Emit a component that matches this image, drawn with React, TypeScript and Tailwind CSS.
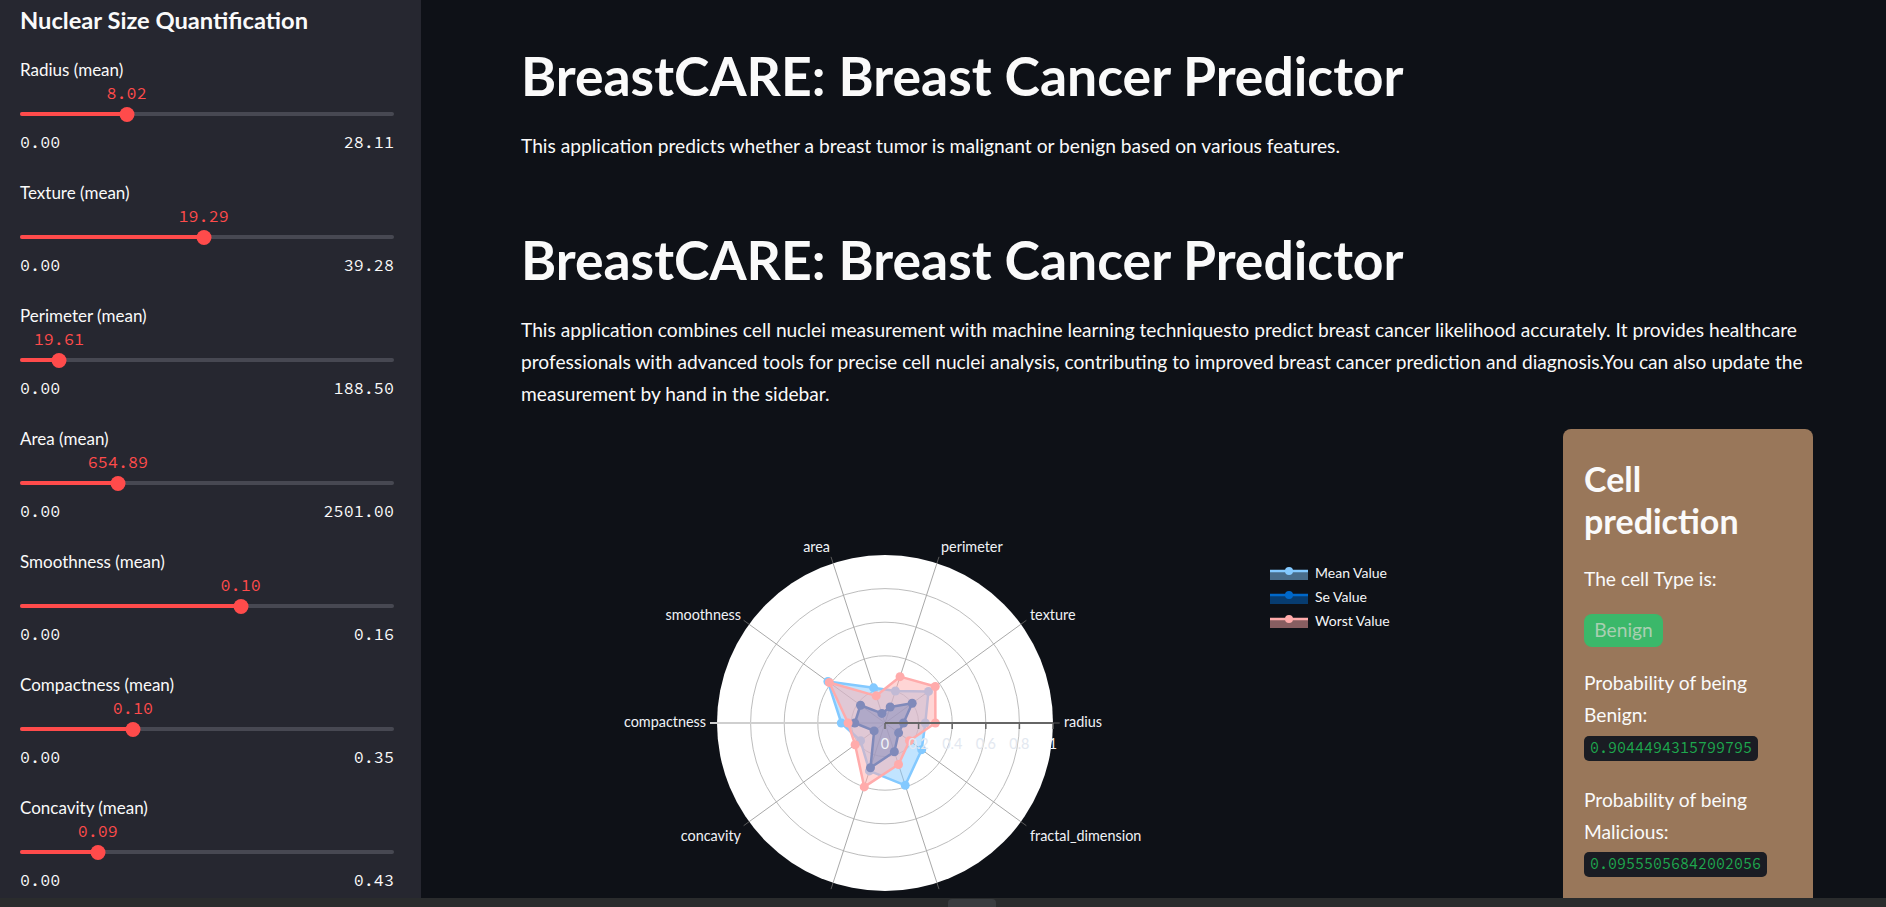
import React from "react";

type SliderSpec = { label: string; value: string; max: string; frac: number };

const sliders: SliderSpec[] = [
  { label: "Radius (mean)", value: "8.02", max: "28.11", frac: 0.285 },
  { label: "Texture (mean)", value: "19.29", max: "39.28", frac: 0.491 },
  { label: "Perimeter (mean)", value: "19.61", max: "188.50", frac: 0.104 },
  { label: "Area (mean)", value: "654.89", max: "2501.00", frac: 0.262 },
  { label: "Smoothness (mean)", value: "0.10", max: "0.16", frac: 0.59 },
  { label: "Compactness (mean)", value: "0.10", max: "0.35", frac: 0.302 },
  { label: "Concavity (mean)", value: "0.09", max: "0.43", frac: 0.208 },
];

function Slider({ s }: { s: SliderSpec }) {
  const pct = `${s.frac * 100}%`;
  return (
    <div className="mb-[19px] flex flex-col">
      <div className="h-[22px] text-[17px] leading-[22px]">{s.label}</div>
      <div className="relative h-[24px]">
        <span
          className="absolute top-0 -translate-x-1/2 text-[16.8px] leading-[24px] text-[#ff4b4b] [font-family:'Source_Code_Pro','DejaVu_Sans_Mono',monospace]"
          style={{ left: pct }}
        >
          {s.value}
        </span>
      </div>
      <div className="relative flex h-[18px] items-center">
        <div className="h-[4px] w-full rounded-full bg-[#474852]" />
        <div className="absolute left-0 h-[4px] rounded-full bg-[#ff4b4b]" style={{ width: pct }} />
        <div
          className="absolute h-[15px] w-[15px] -translate-x-1/2 rounded-full bg-[#ff4b4b]"
          style={{ left: pct }}
        />
      </div>
      <div className="flex h-[40px] items-center justify-between text-[16.8px] [font-family:'Source_Code_Pro','DejaVu_Sans_Mono',monospace]">
        <span>0.00</span>
        <span>{s.max}</span>
      </div>
    </div>
  );
}

const CX = 364;
const CY = 294;
const R = 168;

const cats = [
  "radius",
  "texture",
  "perimeter",
  "area",
  "smoothness",
  "compactness",
  "concavity",
  "concave points",
  "symmetry",
  "fractal_dimension",
];

const traces = [
  { name: "Mean Value", color: "#83c9ff", v: [0.24, 0.32, 0.2, 0.22, 0.42, 0.26, 0.18, 0.3, 0.39, 0.27] },
  { name: "Se Value", color: "#0068c9", v: [0.11, 0.2, 0.1, 0.06, 0.18, 0.18, 0.08, 0.28, 0.18, 0.1] },
  { name: "Worst Value", color: "#ffabab", v: [0.3, 0.37, 0.29, 0.17, 0.41, 0.22, 0.22, 0.4, 0.26, 0.18] },
];

function pt(i: number, v: number): [number, number] {
  const a = (i * 36 * Math.PI) / 180;
  return [CX + R * v * Math.cos(a), CY - R * v * Math.sin(a)];
}

// labels for "concave points" and "symmetry" sit below the visible area
const labels: { t: string; x: number; y: number; anchor: "start" | "end" }[] = [
  { t: "radius", x: 543, y: 293, anchor: "start" },
  { t: "texture", x: 509, y: 186, anchor: "start" },
  { t: "perimeter", x: 420, y: 118, anchor: "start" },
  { t: "area", x: 309, y: 118, anchor: "end" },
  { t: "smoothness", x: 220, y: 186, anchor: "end" },
  { t: "compactness", x: 185, y: 293, anchor: "end" },
  { t: "concavity", x: 220, y: 407, anchor: "end" },
  { t: "fractal_dimension", x: 509, y: 407, anchor: "start" },
];

function RadarChart() {
  return (
    <svg width={1018} height={470} className="block [font-family:'Source_Sans_Pro',Lato,sans-serif]">
      {cats.map((_, i) => {
        const [x1, y1] = pt(i, 1);
        const [x2, y2] = pt(i, 1.04);
        return <line key={`t${i}`} x1={x1} y1={y1} x2={x2} y2={y2} stroke="#5a5a5a" strokeWidth={1} />;
      })}
      <circle cx={CX} cy={CY} r={R} fill="#ffffff" />
      {[0.2, 0.4, 0.6, 0.8].map((g) => (
        <circle key={g} cx={CX} cy={CY} r={R * g} fill="none" stroke="#bdbdbd" strokeWidth={1} />
      ))}
      {cats.map((_, i) => {
        const [x, y] = pt(i, 1);
        return <line key={`s${i}`} x1={CX} y1={CY} x2={x} y2={y} stroke="#a9a9a9" strokeWidth={1} />;
      })}
      <line x1={CX - R - 7} y1={CY} x2={CX} y2={CY} stroke="#cfcfcf" strokeWidth={2} />

      {traces.map((tr) => {
        const pts = tr.v.map((v, i) => pt(i, v));
        const d = pts.map((p) => p.join(",")).join(" ");
        return (
          <g key={tr.name}>
            <polygon points={d} fill={tr.color} fillOpacity={0.5} stroke="none" />
            <polygon points={d} fill="none" stroke={tr.color} strokeWidth={2.5} strokeLinejoin="round" />
            {pts.map((p, i) => (
              <circle key={i} cx={p[0]} cy={p[1]} r={4.5} fill={tr.color} />
            ))}
          </g>
        );
      })}

      <line x1={CX} y1={CY} x2={CX + R} y2={CY} stroke="#666666" strokeWidth={2} />
      {[0, 0.2, 0.4, 0.6, 0.8, 1].map((t) => (
        <g key={t}>
          <line x1={CX + R * t} y1={CY} x2={CX + R * t} y2={CY + 6} stroke="#666666" strokeWidth={1.5} />
          <text
            x={CX + R * t}
            y={CY + 26}
            textAnchor="middle"
            fontSize={14.4}
            fill={t === 0 || t === 1 ? "#f2f4f8" : "#e3e8f0"}
          >
            {t === 0 ? "0" : t === 1 ? "1" : t.toFixed(1)}
          </text>
        </g>
      ))}

      {labels.map((l) => (
        <text key={l.t} x={l.x} y={l.y + 5} textAnchor={l.anchor} fontSize={14.4} fill="#f0f2f6">
          {l.t}
        </text>
      ))}

      {traces.map((tr, i) => {
        const y = 144 + i * 24;
        return (
          <g key={tr.name}>
            <rect x={749} y={y - 3} width={38} height={10} fill={tr.color} fillOpacity={0.5} />
            <line x1={749} y1={y - 2} x2={787} y2={y - 2} stroke={tr.color} strokeWidth={2.5} />
            <circle cx={768} cy={y - 2} r={4} fill={tr.color} />
            <text x={794} y={y + 5} fontSize={14} fill="#f5f6f8">
              {tr.name}
            </text>
          </g>
        );
      })}
    </svg>
  );
}

export default function App() {
  return (
    <div className="flex h-[907px] w-[1886px] flex-col overflow-hidden bg-[#0e1117] text-[#fafafa] [font-family:'Source_Sans_Pro',Lato,'Noto_Sans',sans-serif]">
      <div className="flex h-[898px] overflow-hidden">
        <aside className="w-[421px] shrink-0 bg-[#262730] pl-[20px] pr-[27px] pt-[4px]">
          <h2 className="h-[32px] whitespace-nowrap text-[23.7px] font-bold leading-[32px]">Nuclear Size Quantification</h2>
          <div className="mt-[23px]">
            {sliders.map((s) => (
              <Slider key={s.label} s={s} />
            ))}
          </div>
        </aside>

        <main className="min-w-0 flex-1 pl-[100px] pr-[73px]">
          <h1 className="mt-[44px] h-[63px] whitespace-nowrap text-[53.5px] font-bold leading-[63px]">
            BreastCARE: Breast Cancer Predictor
          </h1>
          <p className="mt-[23px] text-[19.2px] leading-[32px]">
            This application predicts whether a breast tumor is malignant or benign based on various features.
          </p>
          <h1 className="mt-[66px] h-[63px] whitespace-nowrap text-[53.5px] font-bold leading-[63px]">
            BreastCARE: Breast Cancer Predictor
          </h1>
          <p className="mt-[23px] whitespace-nowrap text-[19.2px] leading-[32px]">
            This application combines cell nuclei measurement with machine learning techniquesto predict breast cancer
            likelihood accurately. It provides healthcare
            <br />
            professionals with advanced tools for precise cell nuclei analysis, contributing to improved breast cancer
            prediction and diagnosis.You can also update the
            <br />
            measurement by hand in the sidebar.
          </p>

          <div className="mt-[19px] flex gap-[24px]">
            <div className="h-[470px] w-[1018px] shrink-0">
              <RadarChart />
            </div>
            <div className="h-[500px] w-[250px] shrink-0 rounded-[8px] bg-[#99775a] px-[21px] pt-[29px]">
              <h3 className="text-[34px] font-bold leading-[41.5px]">
                Cell
                <br />
                prediction
              </h3>
              <p className="mt-[22px] text-[19.2px] leading-[32px]">The cell Type is:</p>
              <div className="mt-[19px] flex h-[33px] w-[79px] items-center justify-center rounded-[8px] bg-[#3bb86a] text-[19.2px] text-[#a9cfb2]">
                Benign
              </div>
              <p className="mt-[20px] text-[19.2px] leading-[32px]">
                Probability of being
                <br />
                Benign:
              </p>
              <div className="mt-[5px] inline-flex h-[25px] items-center rounded-[5px] bg-[#1a1c23] px-[6px] text-[15px] text-[#1ea84e] [font-family:'Source_Code_Pro','DejaVu_Sans_Mono',monospace]">
                0.9044494315799795
              </div>
              <p className="mt-[23px] text-[19.2px] leading-[32px]">
                Probability of being
                <br />
                Malicious:
              </p>
              <div className="mt-[4px] inline-flex h-[25px] items-center rounded-[5px] bg-[#1a1c23] px-[6px] text-[15px] text-[#1ea84e] [font-family:'Source_Code_Pro','DejaVu_Sans_Mono',monospace]">
                0.09555056842002056
              </div>
            </div>
          </div>
        </main>
      </div>
      <div className="flex h-[9px] shrink-0 items-start bg-[#2a2c2d]">
        <div className="ml-[948px] mt-[1px] h-[8px] w-[48px] rounded-t-[4px] bg-[#3a3d40]" />
      </div>
    </div>
  );
}
